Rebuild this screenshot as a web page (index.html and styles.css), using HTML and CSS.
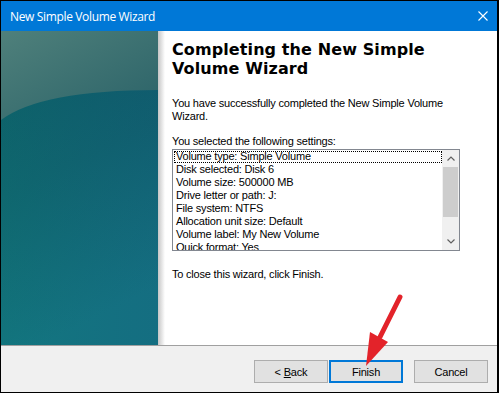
FILE: index.html
```html
<!DOCTYPE html>
<html lang="en">
<head>
    <meta charset="UTF-8">
    <meta name="viewport" content="width=device-width, initial-scale=1.0">
    <title>New Simple Volume Wizard</title>
    <link rel="stylesheet" href="styles.css">
</head>
<body>
    <div class="window">
        <div class="titlebar">
            <span class="title">New Simple Volume Wizard</span>
            <svg class="close" width="10" height="10" viewBox="0 0 10 10">
                <path d="M0.5 0.5L9.5 9.5M9.5 0.5L0.5 9.5" stroke="#fff" stroke-width="1.1"/>
            </svg>
        </div>

        <div class="main">
            <div class="banner">
                <svg width="157" height="314" viewBox="0 0 157 314">
                    <defs>
                        <linearGradient id="deep" x1="0" y1="0" x2="0.25" y2="1">
                            <stop offset="0" stop-color="#0a535e"/>
                            <stop offset="0.5" stop-color="#0e5f69"/>
                            <stop offset="1" stop-color="#13737f"/>
                        </linearGradient>
                        <linearGradient id="tint" x1="0" y1="0" x2="1" y2="0">
                            <stop offset="0" stop-color="#12807f" stop-opacity="0.25"/>
                            <stop offset="1" stop-color="#1a5a8a" stop-opacity="0.2"/>
                        </linearGradient>
                        <linearGradient id="glow" x1="0" y1="0" x2="1" y2="1">
                            <stop offset="0" stop-color="#4f807b"/>
                            <stop offset="1" stop-color="#2a6268"/>
                        </linearGradient>
                    </defs>
                    <rect width="157" height="314" fill="url(#deep)"/>
                    <rect width="157" height="314" fill="url(#tint)"/>
                    <path d="M0 0H157V59Q40 59 0 89Z" fill="url(#glow)"/>
                </svg>
            </div>
            <div class="shade"></div>

            <div class="content">
                <h1>Completing the New Simple<br>Volume Wizard</h1>
                <p class="intro">You have successfully completed the New Simple Volume Wizard.</p>
                <p class="label">You selected the following settings:</p>

                <div class="listbox">
                    <ul class="items">
                        <li class="focused">Volume type: Simple Volume</li>
                        <li>Disk selected: Disk 6</li>
                        <li>Volume size: 500000 MB</li>
                        <li>Drive letter or path: J:</li>
                        <li>File system: NTFS</li>
                        <li>Allocation unit size: Default</li>
                        <li>Volume label: My New Volume</li>
                        <li>Quick format: Yes</li>
                        <li>Enable file and folder compression: No</li>
                    </ul>
                    <div class="scrollbar">
                        <div class="arrow">
                            <svg width="8" height="5" viewBox="0 0 8 5"><path d="M0.5 4.5L4 1L7.5 4.5" fill="none" stroke="#606060" stroke-width="1.2"/></svg>
                        </div>
                        <div class="track"><div class="thumb"></div></div>
                        <div class="arrow">
                            <svg width="8" height="5" viewBox="0 0 8 5"><path d="M0.5 0.5L4 4L7.5 0.5" fill="none" stroke="#606060" stroke-width="1.2"/></svg>
                        </div>
                    </div>
                </div>

                <p class="closing">To close this wizard, click Finish.</p>
            </div>
        </div>

        <div class="footer">
            <button>&lt; <u>B</u>ack</button>
            <button class="default">Finish</button>
            <button class="cancel">Cancel</button>
        </div>

        <!-- annotation arrow drawn over the dialog -->
        <svg class="pointer" width="55" height="90" viewBox="0 0 55 90">
            <path d="M45 12L25 52" stroke="#e3232a" stroke-width="5" stroke-linecap="round"/>
            <path d="M11 81L15 47L33 57Z" fill="#e3232a"/>
        </svg>
    </div>
</body>
</html>
```

FILE: styles.css
```css
body {
    margin: 0;
    background-color: #000;
}

.window {
    position: relative;
    width: 496px;
    margin: 1px 0 0 1px;
    background-color: #fff;
}

.titlebar {
    height: 30px;
    padding: 0 9px;
    display: flex;
    align-items: center;
    justify-content: space-between;
    background-color: #0078d7;
    color: #fff;
    font: 12px "Open Sans", sans-serif;
    letter-spacing: -0.35px;
}

.close {
    display: block;
}

.main {
    display: flex;
    height: 314px;
}

.banner svg {
    display: block;
}

.shade {
    width: 7px;
    background: linear-gradient(to right, #c6c6c6, #fff);
}

.content {
    width: 288px;
    padding: 9px 0 0 7px;
    font: 11px "Liberation Sans", Arial, sans-serif;
    letter-spacing: -0.2px;
    color: #000;
}

h1 {
    margin: 0;
    font: bold 16px/19px "DejaVu Sans", Verdana, sans-serif;
    letter-spacing: 0.1px;
}

.intro,
.label,
.closing {
    line-height: 13px;
}

.intro {
    margin: 19px 0 0;
}

.label {
    margin: 12px 0 0;
}

.listbox {
    display: flex;
    box-sizing: border-box;
    width: 288px;
    height: 102px;
    margin-top: 1px;
    border: 1px solid #828790;
}

.items {
    flex: 1;
    margin: 0;
    padding: 0;
    list-style: none;
    overflow: hidden;
}

.items li {
    position: relative;
    height: 13px;
    line-height: 13px;
    padding-left: 3px;
    white-space: nowrap;
}

.items li.focused::before {
    content: "";
    position: absolute;
    left: 1px;
    right: 0;
    top: 1px;
    bottom: 0;
    border: 1px dotted #000;
}

.scrollbar {
    width: 17px;
    display: flex;
    flex-direction: column;
    background-color: #f0f0f0;
}

.arrow {
    height: 17px;
    display: flex;
    align-items: center;
    justify-content: center;
}

.track {
    flex: 1;
}

.thumb {
    height: 50px;
    margin: 0 1px;
    background-color: #cdcdcd;
}

.closing {
    margin: 17px 0 0;
}

.footer {
    height: 32px;
    padding: 14px 9px 0 0;
    display: flex;
    justify-content: flex-end;
    align-items: flex-start;
    background-color: #f0f0f0;
    border-top: 1px solid #a0a0a0;
}

button {
    box-sizing: border-box;
    width: 74px;
    height: 23px;
    padding: 0;
    background-color: #e1e1e1;
    border: 1px solid #adadad;
    color: #000;
    font: 11px "Liberation Sans", Arial, sans-serif;
    letter-spacing: -0.2px;
}

button.default {
    margin-left: 1px;
    border: 2px solid #0078d7;
}

button.cancel {
    margin-left: 11px;
}

.pointer {
    position: absolute;
    left: 354px;
    top: 284px;
}
```
